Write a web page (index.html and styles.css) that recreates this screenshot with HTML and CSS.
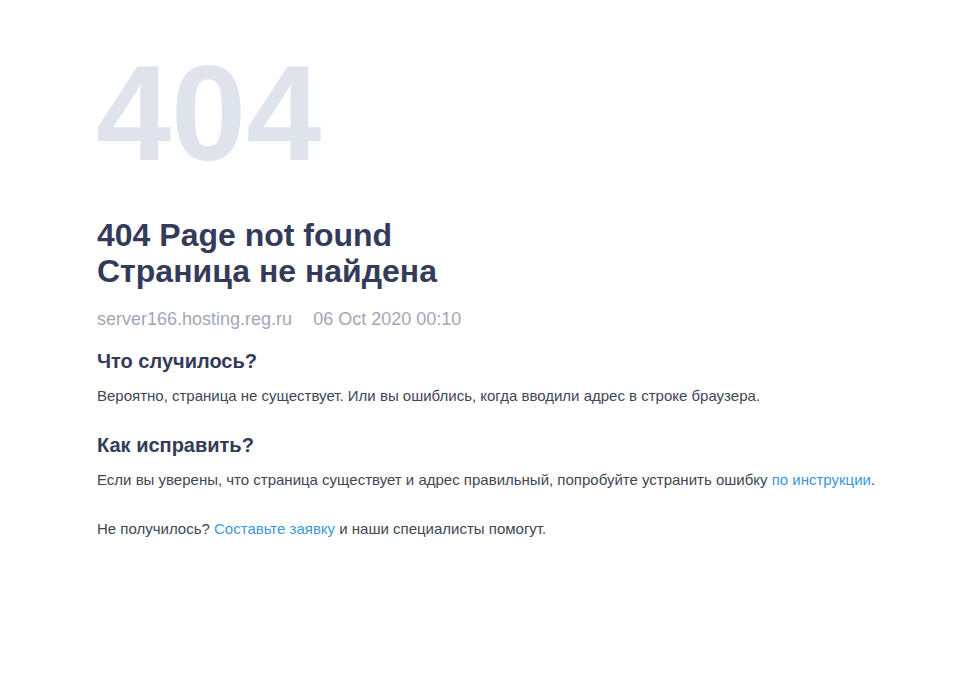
FILE: index.html
```html
<!DOCTYPE html>
<html lang="ru">

<head>
  <meta charset="UTF-8">
  <meta name="viewport" content="width=device-width, initial-scale=1.0">
  <title>404 Page not found</title>
  <link rel="stylesheet" href="styles.css">
</head>

<body>
  <div class="page">
    <div class="code">404</div>

    <h1 class="title">404 Page not found<br>Страница не найдена</h1>

    <div class="meta">
      <span class="host">server166.hosting.reg.ru</span>
      <span class="date">06 Oct 2020 00:10</span>
    </div>

    <h2 class="section-title">Что случилось?</h2>
    <p class="text">Вероятно, страница не существует. Или вы ошиблись, когда вводили адрес в строке браузера.</p>

    <h2 class="section-title section-title--gap">Как исправить?</h2>
    <p class="text">Если вы уверены, что страница существует и адрес правильный, попробуйте устранить ошибку <a href="#">по инструкции</a>.</p>

    <p class="text text--gap">Не получилось? <a href="#">Составьте заявку</a> и наши специалисты помогут.</p>
  </div>
</body>

</html>
```

FILE: styles.css
```css
body {
  margin: 0;
  background-color: #fff;
  font-family: 'Liberation Sans', Arial, sans-serif;
  color: #343b58;
}

.page {
  padding: 46px 40px 0 97px;
}

.code {
  font-size: 135px;
  line-height: 135px;
  font-weight: bold;
  color: #dfe3ec;
  margin-left: -1px;
}

.title {
  margin: 36px 0 0;
  font-size: 32px;
  line-height: 36px;
  font-weight: bold;
  color: #343b5a;
}

.meta {
  margin-top: 18px;
  font-size: 18px;
  line-height: 24px;
  color: #a1a7b7;
}

.meta .date {
  margin-left: 16px;
}

.section-title {
  margin: 18px 0 0;
  font-size: 20px;
  line-height: 24px;
  font-weight: bold;
  color: #343b58;
}

.section-title--gap {
  margin-top: 27px;
}

.text {
  margin: 13px 0 0;
  font-size: 15px;
  line-height: 20px;
  color: #404656;
}

.text--gap {
  margin-top: 29px;
}

.text a {
  color: #3a97dd;
  text-decoration: none;
}
```
